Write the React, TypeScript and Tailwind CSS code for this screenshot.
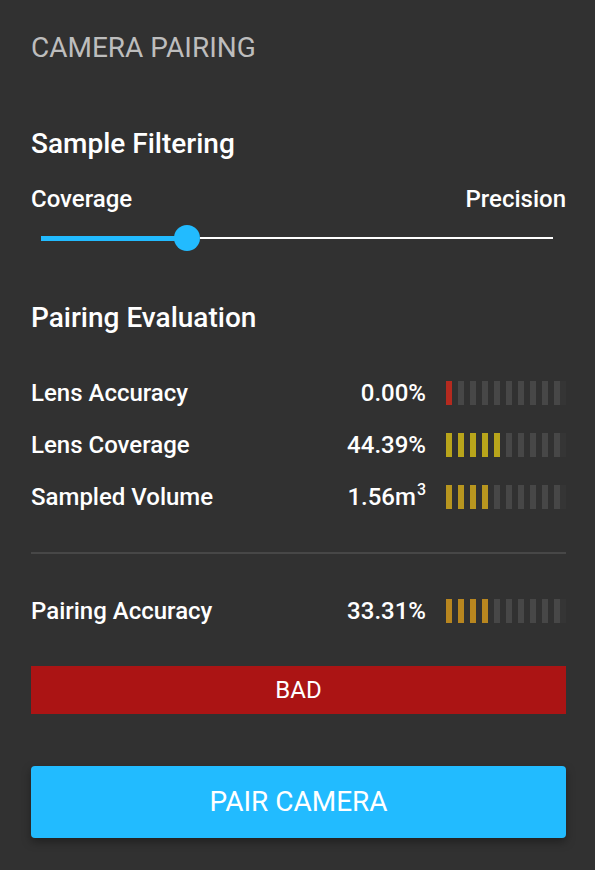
import { FC } from "react";

interface MetricProps {
  label: string;
  value: React.ReactNode;
  filled: number;
  color: string;
}

const Meter: FC<{ filled: number; color: string }> = ({ filled, color }) => {
  const bars = Array.from({ length: 10 }, (_, i) => i < filled);
  return (
    <div className="flex h-[24px] w-[120px] shrink-0">
      <div className="flex h-full gap-[6px]">
        {bars.map((on, i) => (
          <div
            key={i}
            className={`h-full w-[6px] shrink-0 ${on ? "" : "bg-[#474747]"}`}
            style={on ? { backgroundColor: color } : undefined}
          />
        ))}
      </div>
      <div className="h-full w-[6px] shrink-0 bg-[#353535]" />
    </div>
  );
};

const Metric: FC<MetricProps> = ({ label, value, filled, color }) => (
  <div className="flex h-[52px] items-center">
    <span className="font-medium">{label}</span>
    <span className="ml-auto mr-[20px] font-medium">{value}</span>
    <Meter filled={filled} color={color} />
  </div>
);

export default function App() {
  return (
    <div
      className="flex min-h-[870px] w-[595px] flex-col bg-[#313131] pl-[31px] pr-[29px] text-white"
      style={{ fontFamily: "Roboto, 'Noto Sans', sans-serif" }}
    >
      <div className="mt-[32px] text-[28px] leading-[32px] text-[#bdbdbd]">
        CAMERA PAIRING
      </div>

      <div className="mt-[64px] text-[28px] font-medium leading-[32px]">
        Sample Filtering
      </div>

      <div className="mt-[25px] flex justify-between text-[24px] font-medium leading-[28px]">
        <span>Coverage</span>
        <span>Precision</span>
      </div>

      <div className="ml-[10px] mr-[13px] mt-[12px] flex h-[26px] items-center">
        <div className="h-[5px] w-[136px] bg-[#22bbff]" />
        <div className="-ml-[3px] h-[26px] w-[26px] rounded-full bg-[#22bbff]" />
        <div className="h-[2px] flex-1 bg-white" />
      </div>

      <div className="mt-[51px] text-[28px] font-medium leading-[32px]">
        Pairing Evaluation
      </div>

      <div className="mt-[33px] flex flex-col text-[24px]">
        <Metric label="Lens Accuracy" value="0.00%" filled={1} color="#b52a1f" />
        <Metric label="Lens Coverage" value="44.39%" filled={5} color="#b9a51b" />
        <Metric
          label="Sampled Volume"
          value={
            <>
              1.56m<sup className="-top-[10px] ml-[1px] text-[16px]">3</sup>
            </>
          }
          filled={4}
          color="#b8961f"
        />
      </div>

      <div className="mt-[29px] h-[2px] bg-[#474747]" />

      <div className="mt-[31px] text-[24px]">
        <Metric label="Pairing Accuracy" value="33.31%" filled={4} color="#b8861f" />
      </div>

      <div className="mt-[29px] flex h-[48px] items-center justify-center bg-[#ab1414] text-[24px]">
        BAD
      </div>

      <button className="mt-[52px] flex h-[72px] items-center justify-center rounded-[4px] bg-[#22bbff] text-[28px] text-white shadow-[0_4px_10px_rgba(0,0,0,0.35)]">
        PAIR CAMERA
      </button>
    </div>
  );
}
